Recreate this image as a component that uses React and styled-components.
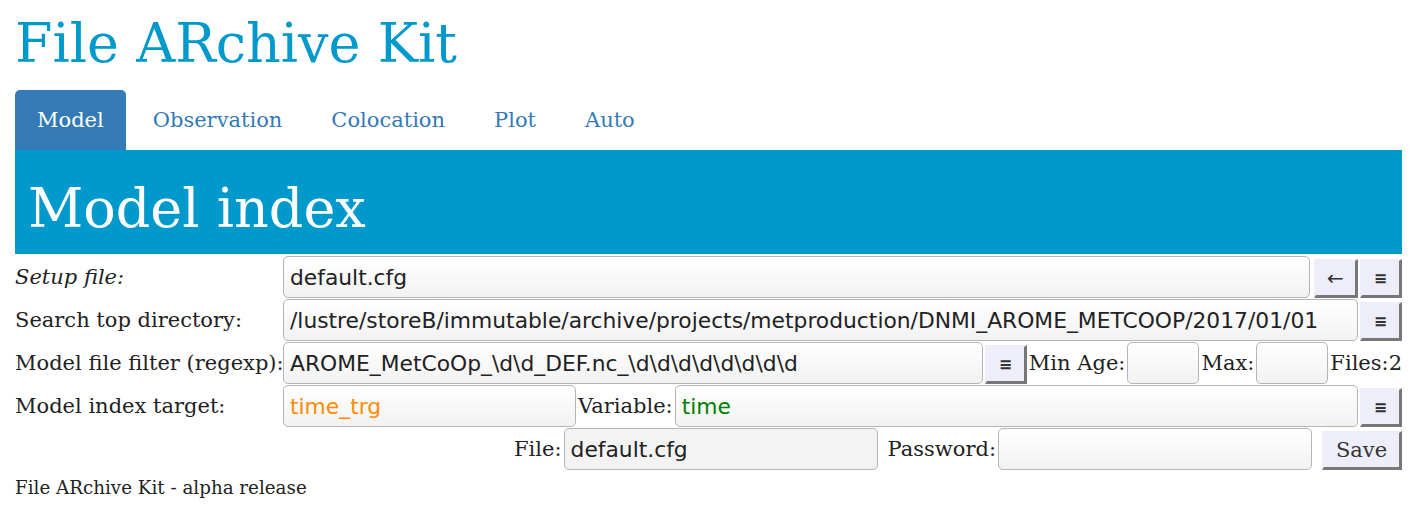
import styled, { createGlobalStyle } from 'styled-components'

const GlobalStyle = createGlobalStyle`
  body {
    margin: 0;
    padding: 0 15px;
    background: #fff;
    font-family: "DejaVu Serif", serif;
    color: #333;
  }
`

const App = () => {
  return (
    <Page>
      <GlobalStyle />
      <Title>File ARchive Kit</Title>
      <Tabs>
        <Tab active>Model</Tab>
        <Tab>Observation</Tab>
        <Tab>Colocation</Tab>
        <Tab>Plot</Tab>
        <Tab>Auto</Tab>
      </Tabs>
      <Banner>Model index</Banner>
      <Form>
        <Row>
          <Label italic>Setup file:</Label>
          <Input defaultValue="default.cfg" />
          <Button first>←</Button>
          <Button>≡</Button>
        </Row>
        <Row>
          <Label>Search top directory:</Label>
          <Input defaultValue="/lustre/storeB/immutable/archive/projects/metproduction/DNMI_AROME_METCOOP/2017/01/01" />
          <Button>≡</Button>
        </Row>
        <Row>
          <Label>Model file filter (regexp):</Label>
          <Input defaultValue="AROME_MetCoOp_\d\d_DEF.nc_\d\d\d\d\d\d\d\d" />
          <Button>≡</Button>
          <Text>Min Age:</Text>
          <Input width="72px" />
          <Text>Max:</Text>
          <Input width="72px" />
          <Text>Files:2</Text>
        </Row>
        <Row>
          <Label>Model index target:</Label>
          <Input width="293px" color="#ff8c00" defaultValue="time_trg" />
          <Text>Variable:</Text>
          <Input color="#008000" defaultValue="time" />
          <Button>≡</Button>
        </Row>
        <Row end>
          <Text>File:</Text>
          <Input width="314px" grey defaultValue="default.cfg" />
          <Text pad="8px">Password:</Text>
          <Input width="314px" type="password" />
          <Button save>Save</Button>
        </Row>
      </Form>
      <Footer>File ARchive Kit - alpha release</Footer>
    </Page>
  )
}

export default App

const Page = styled.div`
  width: 1387px;
`

const Title = styled.h1`
  margin: 0;
  padding-top: 11px;
  height: 79px;
  font-size: 54px;
  font-weight: normal;
  color: #0099cc;
  line-height: 66px;
`

const Tabs = styled.div`
  display: flex;
  gap: 5px;
`

const Tab = styled.div`
  padding: 0 22px;
  height: 60px;
  line-height: 60px;
  font-size: 21px;
  border-radius: 5px 5px 0 0;
  color: ${p => (p.active ? '#fff' : '#337ab7')};
  background: ${p => (p.active ? '#337ab7' : 'transparent')};
`

const Banner = styled.div`
  height: 104px;
  background: #0099cc;
  color: #fff;
  font-size: 54px;
  line-height: 118px;
  padding-left: 13px;
  box-sizing: border-box;
`

const Form = styled.div`
  display: flex;
  flex-direction: column;
  padding-top: 2px;
  gap: 1px;
`

const Row = styled.div`
  display: flex;
  align-items: center;
  justify-content: ${p => (p.end ? 'flex-end' : 'flex-start')};
  gap: 2px;
  height: 42px;
`

const Label = styled.div`
  width: 266px;
  flex: none;
  font-size: 21px;
  font-style: ${p => (p.italic ? 'italic' : 'normal')};
  color: #222;
  white-space: nowrap;
`

const Text = styled.span`
  flex: none;
  font-size: 21px;
  color: #222;
  padding-left: ${p => p.pad || '0'};
`

const Input = styled.input`
  box-sizing: border-box;
  height: 42px;
  ${p => (p.width ? `width: ${p.width}; flex: none;` : 'flex: 1; min-width: 0;')}
  padding: 0 6px;
  border: 1px solid #b5b5b5;
  border-radius: 5px;
  background: ${p => (p.grey ? '#f3f3f3' : 'linear-gradient(#ffffff, #f2f2f2)')};
  font-family: "DejaVu Sans", sans-serif;
  font-size: 21.8px;
  color: ${p => p.color || '#222'};
  outline: none;
`

const Button = styled.button`
  flex: none;
  box-sizing: border-box;
  height: 39px;
  width: ${p => (p.save ? '80px' : p.first ? '44px' : '42px')};
  margin-left: ${p => (p.save ? '8px' : p.first ? '2px' : '0')};
  align-self: flex-end;
  padding: 0;
  background: #eeeefa;
  border: 2px solid;
  border-color: #eeeefa #777 #777 #eeeefa;
  border-width: 2px 3px 3px 2px;
  font-family: ${p => (p.save ? '"DejaVu Serif", serif' : '"DejaVu Sans", sans-serif')};
  font-size: ${p => (p.save ? '21px' : p.first ? '20px' : '16px')};
  font-weight: ${p => (p.save || p.first ? 'normal' : 'bold')};
  color: #333;
`

const Footer = styled.div`
  margin-top: 7px;
  font-size: 18.3px;
  color: #222;
`
